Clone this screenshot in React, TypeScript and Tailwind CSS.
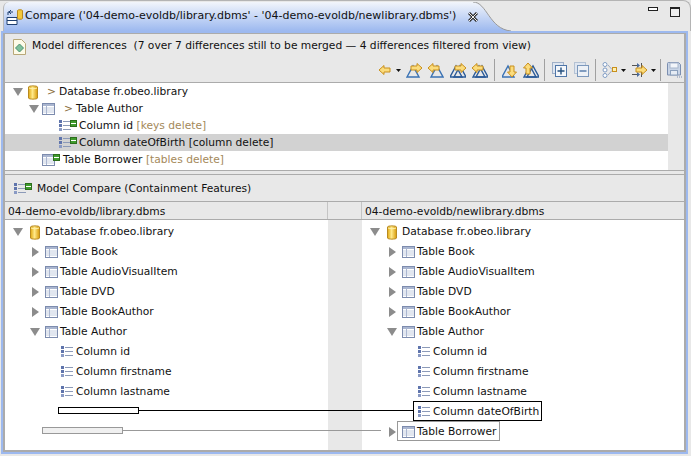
import React from 'react';

const Tri = ({ open }: { open: boolean }) => (
  <svg width="10" height="10" viewBox="0 0 10 10" className="shrink-0">
    {open ? <path d="M0 1h10L5 9z" fill="#8c8c8c" /> : <path d="M2 0l7 5-7 5z" fill="#8c8c8c" />}
  </svg>
);

const Cylinder = () => (
  <svg width="10" height="15" viewBox="0 0 10 15" className="shrink-0">
    <defs>
      <linearGradient id="cyl" x1="0" x2="1" y1="0" y2="0">
        <stop offset="0" stopColor="#e0a810" />
        <stop offset="0.45" stopColor="#ffe98a" />
        <stop offset="1" stopColor="#d89a08" />
      </linearGradient>
    </defs>
    <path d="M.5 2C.5.5 9.500.5 9.500 2v11c0 1.500-9 1.500-9 0z" fill="url(#cyl)" stroke="#b98a20" />
    <path d="M1 3c2 1 6 1 8 0" stroke="#fff2b0" fill="none" />
  </svg>
);

const TableIcon = () => (
  <svg width="13" height="12" viewBox="0 0 13 12" className="shrink-0">
    <rect x=".5" y=".5" width="12" height="11" fill="#fff" stroke="#7d8cae" />
    <rect x="1" y="1" width="11" height="2" fill="#aab6d0" />
    <path d="M1 5h11M1 7h11M1 9h11" stroke="#c4cee0" />
    <path d="M4.500 3v8" stroke="#aab6d0" />
  </svg>
);

const ColumnIcon = () => (
  <svg width="12" height="12" viewBox="0 0 12 12" className="shrink-0">
    <rect x="0" y="0" width="3" height="3" fill="#5f74ac" />
    <rect x="0" y="4" width="3" height="3" fill="#5f74ac" />
    <rect x="0" y="8" width="3" height="3" fill="#8a9ac4" />
    <path d="M4 1.500h8M4 5.500h8M4 9.500h8" stroke="#8c9ab8" />
  </svg>
);

const Badge = () => (
  <svg width="7" height="7" viewBox="0 0 7 7" className="absolute right-0 top-0">
    <rect width="7" height="7" fill="#2c6e1c" />
    <rect x="1" y="1" width="5" height="5" fill="#3f9c2c" />
    <rect x="1" y="3" width="5" height="1" fill="#fff" />
  </svg>
);

const Deleted = ({ table, className }: { table?: boolean; className?: string }) => (
  <span className={`relative inline-flex h-[12px] w-[18px] shrink-0 items-end ${className ?? ''}`}>
    {table ? <TableIcon /> : <ColumnIcon />}
    <Badge />
  </span>
);

// gold arrow used by most toolbar buttons
const Arrow = ({ x, y, dir }: { x: number; y: number; dir: 'l' | 'r' | 'u' | 'd' }) => {
  const rot = { l: 0, r: 180, u: 90, d: 270 }[dir];
  return (
    <g transform={`translate(${x} ${y}) rotate(${rot})`}>
      <path d="M-6 0L-1-4.500V-2H5V2H-1V4.500z" fill="#fbdc7c" stroke="#c88f1c" strokeWidth="1" />
    </g>
  );
};

const Peak = ({ x, y = 0, dark }: { x: number; y?: number; dark?: boolean }) => (
  <path
    d={`M${x} ${15 + y}L${x + 6} ${4 + y}L${x + 12} ${15 + y}z`}
    fill="none"
    stroke={dark ? '#2a5a98' : '#3a72b4'}
    strokeWidth="1.400"
  />
);

const Dropdown = () => (
  <svg width="5" height="3" viewBox="0 0 5 3" className="shrink-0">
    <path d="M0 0h5L2.500 3z" fill="#111" />
  </svg>
);

const Sep = () => <div className="h-[22px] w-px shrink-0 bg-[#a0a0a0]" />;

const Tool = ({ w = 16, children }: { w?: number; children: React.ReactNode }) => (
  <svg width={w} height="16" viewBox={`0 0 ${w} 16`} className="shrink-0">
    {children}
  </svg>
);

const Toolbar = () => (
  <div className="flex h-[24px] items-center justify-end pr-[1px]">
    <Tool w={12}>
      <Arrow x={6} y={8} dir="l" />
    </Tool>
    <span className="mx-[5px] flex"><Dropdown /></span>
    <div className="flex items-center gap-[6px]">
      <Tool><Peak x={1} /><Arrow x={10} y={6} dir="r" /></Tool>
      <Tool><Peak x={3} /><Arrow x={6} y={6} dir="l" /></Tool>
      <Tool><Peak x={4} dark /><Peak x={0} dark /><Arrow x={10} y={6} dir="r" /></Tool>
      <Tool><Peak x={4} dark /><Peak x={1} dark /><Arrow x={6} y={6} dir="l" /></Tool>
    </div>
    <span className="ml-[6px] mr-[7px] flex"><Sep /></span>
    <div className="flex items-center gap-[5px]">
      <Tool><Peak x={0} /><Arrow x={10} y={9} dir="d" /></Tool>
      <Tool><Peak x={4} dark /><Peak x={1} dark /><Arrow x={5} y={7} dir="u" /></Tool>
    </div>
    <span className="ml-[5px] mr-[7px] flex"><Sep /></span>
    <div className="flex items-center gap-[7px]">
      <Tool w={15}>
        <rect x="0.500" y="0.500" width="11" height="11" fill="#dfe6f0" stroke="#9fb0c8" />
        <rect x="3.500" y="3.500" width="11" height="11" fill="#f4f7fb" stroke="#4f76a8" />
        <path d="M9 5.500v7M5.500 9h7" stroke="#24507f" strokeWidth="1.400" />
      </Tool>
      <Tool w={15}>
        <rect x="0.500" y="0.500" width="11" height="11" fill="#dfe6f0" stroke="#b4c2d4" />
        <rect x="3.500" y="3.500" width="11" height="11" fill="#edf1f6" stroke="#7c98bc" />
        <path d="M5.500 9h7" stroke="#4f76a8" strokeWidth="1.400" />
      </Tool>
    </div>
    <span className="mx-[6px] flex"><Sep /></span>
    <Tool w={15}>
      <circle cx="3" cy="2.500" r="2" fill="#fff" stroke="#7f9cc4" />
      <circle cx="3" cy="8" r="2" fill="#fff" stroke="#7f9cc4" />
      <circle cx="3" cy="13.500" r="2" fill="#fff" stroke="#7f9cc4" />
      <path d="M6 3l4 4.500M6 13l4-4.500" stroke="#9aa8c0" />
      <rect x="10.500" y="5.500" width="4" height="4" fill="#fff0b0" stroke="#c88f1c" />
    </Tool>
    <span className="ml-[4px] mr-[5px] flex"><Dropdown /></span>
    <Tool>
      <path d="M1 3.500h7M1 12.500h7" stroke="#555" />
      <path d="M6 1l3 2.500L6 6zM6 10l3 2.500L6 15z" fill="#4a6a9a" />
      <path d="M10.500 1v5M10.500 10v5" stroke="#555" />
      <Arrow x={10} y={8} dir="r" />
    </Tool>
    <span className="ml-[4px] mr-[4px] flex"><Dropdown /></span>
    <Sep />
    <span className="ml-[6px] flex">
      <Tool>
        <path d="M.5 1.500a1 1 0 011-1h10l2 2v10.500h-13z" fill="#c8d4e6" stroke="#7c8fb0" />
        <rect x="3" y="1" width="8" height="5" fill="#f2f5fa" stroke="#a8b6cc" />
        <rect x="3.500" y="8.500" width="7" height="4.500" fill="#e6ecf4" stroke="#8ba0bc" />
        <path d="M10 15h1M12 15h1M14 15h1" stroke="#7c8fb0" />
      </Tool>
    </span>
  </div>
);

const Tan = ({ children }: { children: React.ReactNode }) => (
  <span className="text-[#a4895a]">{children}</span>
);

const DiffRow = ({ pad, selected, children }: { pad: number; selected?: boolean; children: React.ReactNode }) => (
  <div
    className={`flex h-[17px] items-center pt-[1px] whitespace-nowrap ${selected ? 'bg-[#d2d2d2]' : ''}`}
    style={{ paddingLeft: pad }}
  >
    {children}
  </div>
);

const tables = ['Table Book', 'Table AudioVisualItem', 'Table DVD', 'Table BookAuthor'];

const Row = ({ pad, children }: { pad: number; children: React.ReactNode }) => (
  <div className="flex h-[20px] items-center whitespace-nowrap" style={{ paddingLeft: pad }}>
    {children}
  </div>
);

const SideTree = ({ dateOfBirth }: { dateOfBirth?: boolean }) => (
  <div className="pt-[2px]">
    <Row pad={8}>
      <Tri open />
      <span className="ml-[7px] mr-[5px] flex"><Cylinder /></span>
      Database fr.obeo.library
    </Row>
    {tables.map((t) => (
      <Row pad={25} key={t}>
        <Tri open={false} />
        <span className="ml-[5px] mr-[2px] flex"><TableIcon /></span>
        {t}
      </Row>
    ))}
    <Row pad={25}>
      <Tri open />
      <span className="ml-[5px] mr-[2px] flex"><TableIcon /></span>
      Table Author
    </Row>
    {['Column id', 'Column firstname', 'Column lastname'].map((c) => (
      <Row pad={56} key={c}>
        <ColumnIcon />
        <span className="ml-[3px]">{c}</span>
      </Row>
    ))}
    {dateOfBirth && (
      <>
        <Row pad={56}>
          <ColumnIcon />
          <span className="ml-[3px]">Column dateOfBirth</span>
        </Row>
        <Row pad={25}>
          <Tri open={false} />
          <span className="ml-[5px] mr-[2px] flex"><TableIcon /></span>
          Table Borrower
        </Row>
      </>
    )}
  </div>
);

export default function App() {
  return (
    <div className="relative h-[456px] w-[691px] overflow-hidden bg-[#e8e8e8] text-[10.7px] text-[#111] [font-family:'DejaVu_Sans',sans-serif]">
      {/* title tab */}
      <div className="flex h-[31px] items-start rounded-tr-[8px] border-t border-r border-[#b4b4b4] pt-[1px]">
        <div className="ml-[3px] flex h-[29px] w-[470px] items-center rounded-tl-[6px] border-l border-l-[#b8b8b8] bg-gradient-to-b from-[#f2f5fb] to-[#9db9ef] pl-[2px] whitespace-nowrap">
          <svg width="18" height="16" viewBox="0 0 18 16" className="shrink-0">
            <path d="M1 8.500h10v7H1zM1 11.500h10" fill="#fff" stroke="#1f3f6f" />
            <path d="M2 6V3h5M5 1L3 3l2 2" fill="none" stroke="#1f3f6f" />
            <path d="M11.500 1.500c0-1 5-1 5 0v8c0 1-5 1-5 0z" fill="#f4c83c" stroke="#b98a20" />
          </svg>
          <span className="ml-[1px] w-[443px] shrink-0 text-[11px]">Compare ('04-demo-evoldb/library.dbms' - '04-demo-evoldb/newlibrary.dbms')</span>
          <svg width="10" height="10" viewBox="0 0 10 10" className="relative z-10 shrink-0">
            <path d="M1 1l8 8M9 1L1 9" stroke="#333" strokeWidth="3" />
            <path d="M1 1l8 8M9 1L1 9" stroke="#eee" strokeWidth="1" />
          </svg>
        </div>
        <svg width="40" height="29" viewBox="0 0 40 29" className="shrink-0">
          <defs>
            <linearGradient id="tail" x1="0" x2="0" y1="0" y2="1">
              <stop offset="0" stopColor="#f2f5fb" />
              <stop offset="1" stopColor="#9db9ef" />
            </linearGradient>
          </defs>
          <path d="M0 0C14 0 16 27 38 29H0z" fill="url(#tail)" />
          <path d="M0 0C14 0 16 27 38 29" fill="none" stroke="#9a9a9a" />
        </svg>
        <div className="ml-auto flex items-start gap-[12px] pr-[10px] pt-[5px]">
          <div className="h-[4px] w-[10px] border border-[#222] bg-white" />
          <div className="h-[10px] w-[10px] border border-t-2 border-[#222] bg-[#eee]" />
        </div>
      </div>

      {/* view frame */}
      <div className="ml-[1px] h-[423px] w-[687px] border-2 border-[#9db9ef]">
        <div className="flex h-full flex-col border-2 border-t border-[#ababab]">
          {/* differences header */}
          <div className="h-[49px] shrink-0 border-b border-[#ababab]">
            <div className="flex h-[24px] items-center gap-[6px] pl-[8px] pt-[1px] whitespace-nowrap">
              <svg width="13" height="16" viewBox="0 0 13 16" className="shrink-0">
                <path d="M.5.5h8l4 4v11H.5z" fill="#fdfbe8" stroke="#b8a878" />
                <path d="M6.500 5l4 4-4 4-4-4z" fill="#7fc09c" stroke="#4a9070" />
              </svg>
              Model differences&nbsp; (7 over 7 differences still to be merged — 4 differences filtered from view)
            </div>
            <Toolbar />
          </div>

          {/* differences tree */}
          <div className="flex h-[87px] shrink-0">
            <div className="min-w-0 flex-1 bg-white">
              <DiffRow pad={8}>
                <Tri open />
                <span className="ml-[5px] flex"><Cylinder /></span>
                <span className="ml-[9px] mr-[3px] text-[#8a6d3b]">&gt;</span>
                Database fr.obeo.library
              </DiffRow>
              <DiffRow pad={24}>
                <Tri open />
                <span className="ml-[3px] flex"><TableIcon /></span>
                <span className="ml-[9px] mr-[3px] text-[#8a6d3b]">&gt;</span>
                Table Author
              </DiffRow>
              <DiffRow pad={54}>
                <Deleted />
                <span className="ml-[2px]">Column id <Tan>[keys delete]</Tan></span>
              </DiffRow>
              <DiffRow pad={54} selected>
                <Deleted />
                <span className="ml-[2px]">Column dateOfBirth [column delete]</span>
              </DiffRow>
              <DiffRow pad={37}>
                <Deleted table />
                <span className="ml-[3px]">Table Borrower <Tan>[tables delete]</Tan></span>
              </DiffRow>
            </div>
            <div className="w-[16px] shrink-0" />
          </div>

          {/* sash */}
          <div className="h-[5px] shrink-0 border-y border-[#ababab]" />

          {/* model compare */}
          <div className="flex h-[26px] shrink-0 items-center gap-[4px] pl-[9px] pt-[2px]">
            <Deleted />
            <span className="ml-[1px]">Model Compare (Containment Features)</span>
          </div>
          <div className="flex h-[19px] shrink-0 border-y border-[#ababab]">
            <div className="w-[323px] shrink-0 border-r border-[#c4c4c4] pl-[3px] leading-[19px]">04-demo-evoldb/library.dbms</div>
            <div className="w-[34px] shrink-0 border-r border-[#c4c4c4]" />
            <div className="flex-1 pl-[3px] leading-[19px]">04-demo-evoldb/newlibrary.dbms</div>
          </div>
          <div className="flex min-h-0 flex-1">
            <div className="w-[323px] shrink-0 bg-white"><SideTree /></div>
            <div className="w-[34px] shrink-0" />
            <div className="flex-1 bg-white"><SideTree dateOfBirth /></div>
          </div>
        </div>
      </div>

      {/* merge connectors drawn over the panes */}
      <div className="absolute left-[58px] top-[407px] h-[7px] w-[81px] border border-black bg-white" />
      <div className="absolute left-[139px] top-[410px] h-px w-[274px] bg-black" />
      <div className="absolute left-[413px] top-[401px] h-[20px] w-[129px] border border-black" />
      <div className="absolute left-[42px] top-[427px] h-[7px] w-[81px] border border-[#999] bg-[#f0f0f0]" />
      <div className="absolute left-[123px] top-[430px] h-px w-[258px] bg-[#999]" />
      <div className="absolute left-[397px] top-[421px] h-[20px] w-[103px] border border-[#999]" />
    </div>
  );
}
